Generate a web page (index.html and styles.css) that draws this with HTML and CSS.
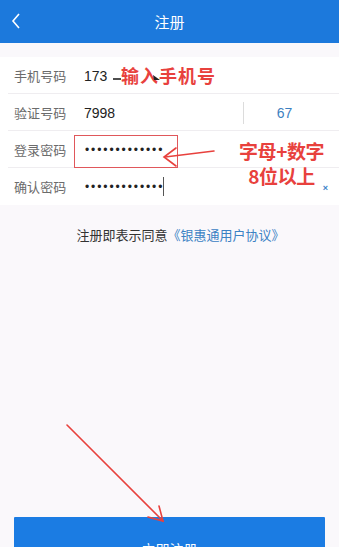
FILE: index.html
```html
<!DOCTYPE html>
<html lang="zh">
<head>
<meta charset="utf-8">
<link rel="stylesheet" href="styles.css">
</head>
<body>
<div class="page">
  <header class="topbar">
    <svg class="back" width="10" height="16" viewBox="0 0 10 16"><path d="M8 1 L2 8 L8 15" fill="none" stroke="#fff" stroke-width="1.6"/></svg>
    <h1 class="title">注册</h1>
  </header>

  <section class="form">
    <div class="row">
      <span class="label">手机号码</span>
      <span class="value">173</span>
    </div>
    <div class="row">
      <span class="label">验证号码</span>
      <span class="value grow">7998</span>
      <span class="divider"></span>
      <span class="code">67</span>
    </div>
    <div class="row">
      <span class="label">登录密码</span>
      <span class="value dots">•••••••••••••</span>
    </div>
    <div class="row last">
      <span class="label">确认密码</span>
      <span class="value dots">•••••••••••••</span><span class="caret"></span>
      <span class="clear">×</span>
    </div>
  </section>

  <p class="agree">注册即表示同意<span class="link">《银惠通用户协议》</span></p>

  <button class="submit">立即注册</button>

  <div class="note note-phone">输入手机号</div>
  <div class="note note-pwd"><div>字母+数字</div><div>8位以上</div></div>
  <div class="box"></div>
  <svg class="marks" width="339" height="547" viewBox="0 0 339 547">
    <path d="M113 79 L121 79" stroke="#222" stroke-width="1.6"/>
    <path d="M153 75 L160 80 L154 80 Z" fill="#222"/>
    <g stroke="#e8413d" stroke-width="1.6" fill="none" stroke-linecap="round">
      <path d="M214 151 L165 157"/>
      <path d="M176 148 L164 157 L176 166"/>
      <path d="M67 425 L163 521"/>
      <path d="M159 506 L163 521 L148 517"/>
    </g>
  </svg>
</div>
</body>
</html>
```

FILE: styles.css
```css
* { box-sizing: border-box; }
html, body { margin: 0; padding: 0; }
body {
  font-family: "Noto Sans CJK SC", "Liberation Sans", sans-serif;
  background: #faf8fb;
}
.page {
  position: relative;
  width: 339px;
  height: 547px;
  overflow: hidden;
  background: #faf8fb;
}
.topbar {
  height: 43px;
  background: #1c79dc;
  display: flex;
  align-items: center;
  justify-content: center;
  position: relative;
}
.back {
  position: absolute;
  left: 11px;
  top: 13px;
}
.title {
  margin: 0;
  font-size: 15px;
  font-weight: normal;
  color: #fff;
  line-height: 1;
}
.form {
  margin-top: 14px;
  background: #fff;
}
.row {
  height: 37px;
  display: flex;
  align-items: center;
  padding-left: 14px;
  padding-right: 14px;
  position: relative;
}
.row::after {
  content: "";
  position: absolute;
  left: 8px;
  right: 0;
  bottom: 0;
  height: 1px;
  background: #efedf0;
}
.row.last::after { display: none; }
.label {
  width: 70px;
  flex-shrink: 0;
  font-size: 13px;
  color: #6b6b6b;
  letter-spacing: 0.1px;
}
.value {
  font-family: "Liberation Sans", "Noto Sans CJK SC", sans-serif;
  font-size: 14px;
  color: #222;
}
.grow { flex: 1; }
.dots {
  font-size: 12px;
  letter-spacing: 1.9px;
  margin-left: 1px;
}
.caret {
  width: 1px;
  height: 19px;
  background: #555;
  margin-left: -1px;
}
.divider {
  width: 1px;
  height: 22px;
  background: #dcdcdc;
}
.code {
  width: 81px;
  text-align: center;
  font-family: "Liberation Sans", sans-serif;
  font-size: 14px;
  color: #3d7fc0;
}
.clear {
  margin-left: auto;
  margin-right: -3px;
  margin-top: 3px;
  font-family: "Liberation Sans", sans-serif;
  font-size: 9px;
  font-weight: bold;
  color: #3b82c8;
  line-height: 1;
}
.agree {
  margin: 20px 0 0;
  height: 20px;
  line-height: 20px;
  text-align: center;
  font-size: 13px;
  color: #333;
  padding-left: 22px;
}
.link { color: #3b82c4; }
.submit {
  display: block;
  margin: 272px 0 0 14px;
  width: 311px;
  height: 48px;
  border: 0;
  border-radius: 1px;
  background: #1b7ce3;
  color: #fff;
  font-family: "Noto Sans CJK SC", sans-serif;
  font-size: 14px;
  padding: 16px 0 0;
  line-height: 20px;
  text-align: center;
}
.note {
  position: absolute;
  color: #e8413d;
  font-weight: bold;
  font-size: 18px;
  line-height: 22px;
  text-shadow: 0 0 2px #fff, 0 0 2px #fff;
  text-align: center;
}
.note-phone { left: 121px; top: 64px; letter-spacing: 1px; }
.note-pwd { left: 239px; top: 138px; font-size: 19px; line-height: 25px; letter-spacing: -0.4px; }
.box {
  position: absolute;
  left: 74px;
  top: 135px;
  width: 104px;
  height: 33px;
  border: 1.5px solid #e0575b;
}
.marks {
  position: absolute;
  left: 0;
  top: 0;
  pointer-events: none;
}
```
